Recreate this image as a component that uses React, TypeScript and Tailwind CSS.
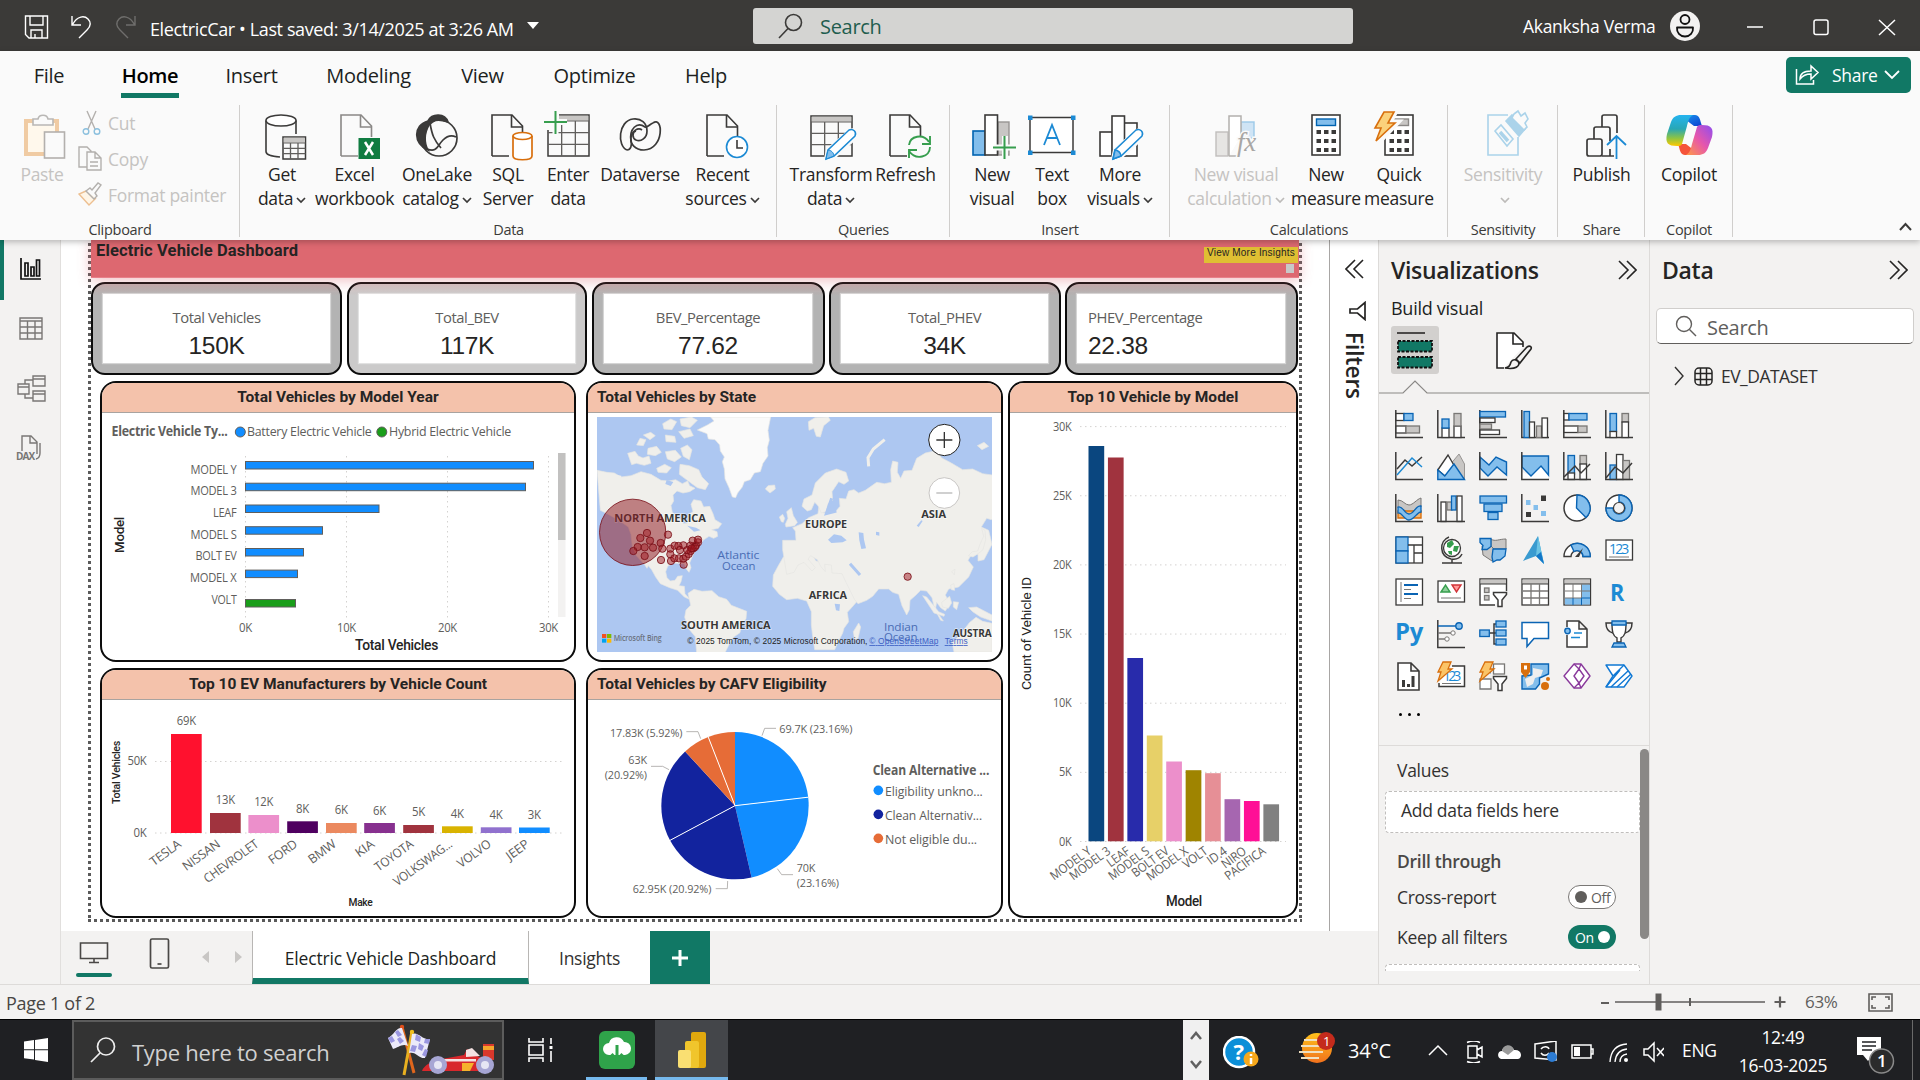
import React from "react";

type P = { children?: React.ReactNode };

/* ---------- shared svg text ---------- */
function Txt({ x, y, s, len, anchor = "start", fill = "#605e5c", w = 400, rot, din, children }: {
  x: number; y: number; s: number; len?: number; anchor?: "start" | "middle" | "end"; fill?: string; w?: number; rot?: number; din?: boolean; children: React.ReactNode;
}) {
  return (
    <text x={x} y={y} fontSize={s} textAnchor={anchor} fill={fill} fontWeight={w} textLength={len} lengthAdjust="spacingAndGlyphs"
      transform={rot ? `rotate(${rot} ${x} ${y})` : undefined} fontFamily={din ? "Roboto, sans-serif" : "'Open Sans', sans-serif"}>
      {children}
    </text>
  );
}

/* ---------- title bar ---------- */
function TitleBar() {
  return (
    <header className="flex h-[51px] shrink-0 items-center bg-[#3b3a38] text-white">
      <svg className="ml-6 shrink-0" width="112" height="28" viewBox="0 0 112 28" fill="none" stroke="#fff" strokeWidth="1.4">
        <path d="M1.500 4h22v22H5l-3.500-3.500zM6 4v9h13V4M7 26v-8h11v8M11 22v4" />
        <path d="M48 4v9h9M48.500 12.500c5-9 12-9 15.500-5.500 4 4 2 8-1 11l-8 8" />
        <path d="M111 4v9h-9M110.500 12.500c-5-9-12-9-15.500-5.500-4 4-2 8 1 11l8 8" stroke="#6f6e6c" />
      </svg>
      <span className="ml-[14px] mt-[7px] w-[366px] whitespace-nowrap text-[18px] leading-6 tracking-[-0.021em]">ElectricCar • Last saved: 3/14/2025 at 3:26 AM</span>
      <span className="ml-[11px] h-0 w-0 border-x-[6px] border-t-[7px] border-x-transparent border-t-white" />
      <div className="ml-[214px] flex h-9 w-[600px] items-center rounded-[3px] bg-[#d4d4d2] pl-[25px]">
        <svg width="25" height="26" viewBox="0 0 25 26" fill="none" stroke="#3b3a38" strokeWidth="1.600">
          <circle cx="15.500" cy="9.500" r="8" /><path d="M10 15.500L1 25" />
        </svg>
        <span className="ml-[17px] mt-[3px] text-[20px] leading-7 text-[#1f5d4e]">Search</span>
      </div>
      <span className="ml-[170px] mt-px w-[132px] whitespace-nowrap text-[17.500px]">Akanksha Verma</span>
      <svg className="ml-[14px]" width="32" height="32" viewBox="0 0 32 32">
        <circle cx="16" cy="16" r="15" fill="#f3f2f1" />
        <circle cx="16" cy="9.500" r="4.500" fill="none" stroke="#111" strokeWidth="1.800" />
        <path d="M8 17.500h16c.500 5-3 9-8 9s-8.500-4-8-9z" fill="none" stroke="#111" strokeWidth="1.800" strokeLinejoin="round" />
      </svg>
      <svg className="ml-[46px] mt-[2px]" width="150" height="20" viewBox="0 0 150 20" fill="none" stroke="#fff" strokeWidth="1.500">
        <path d="M0 10h16M132 3l16 15M148 3l-16 15" /><rect x="67" y="3" width="14" height="14.500" rx="2" />
      </svg>
    </header>
  );
}

/* ---------- ribbon ---------- */
const tabs: [string, string][] = [
  ["File", "w-[32px]"], ["Home", "w-[58px]"], ["Insert", "w-[52px]"], ["Modeling", "w-[89px]"], ["View", "w-[45px]"], ["Optimize", "w-[85px]"], ["Help", "w-[44px]"],
];
function Tabs() {
  return (
    <nav className="flex h-[47px] items-stretch pl-[33px] text-[20px] text-[#201f1e]">
      {tabs.map(([t, w], i) => (
        <div key={t} className={`flex h-[47px] flex-col items-center ${w} ${i === 0 ? "mr-[56px]" : i > 2 ? "mr-[47px]" : "mr-[46.500px]"}`}>
          <span className={`mt-[11px] h-[31px] whitespace-nowrap leading-[28px] ${i === 1 ? "font-semibold text-black" : ""}`}>{t}</span>
          {i === 1 && <span className="h-[5px] w-[58px] bg-[#117865]" />}
        </div>
      ))}
      <div className="ml-auto mr-[9px] mt-[6px] flex h-9 w-[125px] items-center rounded-[5px] bg-[#117865] text-white">
        <svg className="ml-[9px]" width="25" height="24" viewBox="0 0 25 24" fill="none" stroke="#fff" strokeWidth="1.500">
          <path d="M1.500 6v15h17v-4M5 16c0-6 5-8 11-8V3l7 6.500-7 6.500v-5c-5 0-8 1-11 5z" />
        </svg>
        <span className="ml-[12px] w-[45px] text-[17.500px]">Share</span>
        <svg className="ml-[7px]" width="16" height="10" viewBox="0 0 16 10" fill="none" stroke="#fff" strokeWidth="1.800"><path d="M1 1l7 7 7-7" /></svg>
      </div>
    </nav>
  );
}

const dk = "#3b3a39";
const bl = "#1c8ad4";
const Doc = ({ x = 0, c = dk }: { x?: number; c?: string }) => (
  <g transform={`translate(${x} 0)`} fill="none" stroke={c} strokeWidth="1.600">
    <path d="M0 45V4h20l10.500 11v11M0 45h17" /><path d="M19.500 4v12h11" />
  </g>
);
const GridIc = ({ x, y, w, h, n = 3, c = dk }: { x: number; y: number; w: number; h: number; n?: number; c?: string }) => {
  const hh = 6;
  const l: string[] = [];
  for (let i = 1; i < n; i++) { l.push(`M${x + (w * i) / n} ${y + hh}V${y + h}`); l.push(`M${x} ${y + hh + ((h - hh) * i) / 3}h${w}`); }
  return <g><rect x={x} y={y} width={w} height={h} fill="#fafafa" stroke={c} strokeWidth="1.500" /><rect x={x + 0.7} y={y + 0.7} width={w - 1.400} height={hh - 1} fill="#c8c6c4" /><path d={`M${x} ${y + hh}h${w}`} stroke="#605e5c" /><path d={l.join("")} stroke="#605e5c" strokeWidth="1.300" /></g>;
};
const Pencil = ({ x }: { x: number }) => (
  <g transform={`translate(${x} 0)`}>
    <path d="M-8 48l2-9L16 20c4-2 8 2 6 6L1 45z" fill="#fafafa" stroke="#fafafa" strokeWidth="4" />
    <path d="M-8 48l2-9L15 19c4-2 8 2 6 6L0 45z" fill="#fff" stroke={bl} strokeWidth="1.500" />
    <path d="M-8 48l2-9c3 0 6 3 6 6z" fill="#83beec" stroke={bl} />
  </g>
);
const Calc = ({ x, sc = "#83beec", ss = "#0063b1" }: { x: number; sc?: string; ss?: string }) => (
  <g transform={`translate(${x} 0)`}>
    <rect x="0" y="4" width="28" height="40" fill="#fff" stroke={dk} strokeWidth="1.600" />
    <rect x="4.500" y="8" width="19" height="6.500" fill={sc} stroke={ss} strokeWidth="1.400" />
    {[0, 1, 2].map((r) => [0, 1, 2].map((c) => <rect key={`${r}${c}`} x={4.500 + c * 7.500} y={19 + r * 9} width="4.500" height="4" fill={dk} />))}
  </g>
);

const icons: Record<string, React.ReactNode> = {
  get: <g><path d="M-16 9.500v31c0 3 6 5 14 5.500M14 9.500V23" fill="none" stroke={dk} strokeWidth="1.600" /><ellipse cx="-1" cy="9.500" rx="15" ry="5.500" fill="#fff" stroke={dk} strokeWidth="1.600" /><GridIc x={1} y={26} w={22.500} h={22} /></g>,
  excel: <g><Doc x={-14} c="#8a8886" /><rect x="3.500" y="27" width="21.500" height="21" fill="#107c41" /><path d="M10 31l8 13M18 31l-8 13" stroke="#fff" strokeWidth="2.500" /></g>,
  lake: <g fill="none" stroke={dk} strokeWidth="1.700"><circle cx="2" cy="27" r="18" /><path d="M-9 10C-5 2 8 2 11 11-1 7-4 10-8 14c-5 8-5 18-1 25-15-6-15-25 0-29z" fill={dk} /><path d="M-7 12c2 12 4 17 11 25M-10 38c10 4 10-3 16-9 5-5 9-5 13-3" /></g>,
  sql: <g><Doc x={-16} /><path d="M5 25v20c0 5 19 5 19 0V25" fill="#fff" stroke="#d86f0d" strokeWidth="1.700" /><ellipse cx="14.500" cy="25" rx="9.500" ry="3.500" fill="#fff" stroke="#d86f0d" strokeWidth="1.700" /></g>,
  enter: <g><GridIc x={-20} y={4} w={41} h={41} /><path d="M-23 0h14v19h-14z" fill="#fafafa" /><path d="M-24 11h23M-12.500 0v23" stroke="#fafafa" strokeWidth="6" /><path d="M-24 11h23M-12.500 0v23" stroke="#379e4e" strokeWidth="2" /></g>,
  data: <g fill="none" stroke={dk} strokeWidth="1.700"><path d="M-13 39c-10-4-9-29 6-31 8-1 14 4 14 12 0 7-6 11-11 9-4-2-4-8 0-9" /><path d="M13 12c10-8 12 26-9 27-9 0-14-6-13-13 1-6 7-10 11-7" /><path d="M-13 39c4 0 5-5 4-9-2-12 6-20 14-14 2 1 5-3 8-4" /></g>,
  recent: <g><Doc x={-16} /><circle cx="14" cy="36" r="10.500" fill="#fff" stroke={bl} strokeWidth="1.600" /><path d="M14 29v8h6" fill="none" stroke={dk} strokeWidth="1.600" /></g>,
  transform: <g><GridIc x={-20} y={5} w={41} h={40} /><Pencil x={3} /></g>,
  refresh: <g><Doc x={-16} /><path d="M3 34c1-9 14-12 20-3M24 36c0 10-14 14-21 4" fill="none" stroke="#379e4e" strokeWidth="1.900" /><path d="M24 25v8h-8M3 47v-8h8" fill="none" stroke="#379e4e" strokeWidth="1.900" /></g>,
  newvis: <g><rect x="-19" y="20" width="12" height="24" fill="#83beec" stroke="#0063b1" strokeWidth="1.600" /><rect x="6" y="11" width="11" height="33" fill="#c8c6c4" stroke="#979593" strokeWidth="1.400" /><rect x="-7" y="4" width="12.500" height="40" fill="#fff" stroke={dk} strokeWidth="1.600" /><path d="M2 36.500h22M13 25v23" stroke="#fafafa" strokeWidth="6" /><path d="M1 36.500h23M12.500 25v23" stroke="#379e4e" strokeWidth="2" /></g>,
  text: <g><rect x="-22" y="6.500" width="43" height="35" fill="#fff" stroke={dk} strokeWidth="1.500" /><path d="M-8 34L0 14l8 20M-5 27H5" fill="none" stroke={bl} strokeWidth="1.800" />{[[-22, 6.500], [21, 6.500], [-22, 41.500], [21, 41.500]].map(([a, b]) => <rect key={`${a}${b}`} x={a - 2} y={b - 2} width="4.500" height="4.500" fill={bl} />)}</g>,
  more: <g fill="#fff" stroke={dk} strokeWidth="1.600"><rect x="-20" y="21" width="12.500" height="24" /><rect x="4" y="12" width="13" height="33" /><rect x="-8" y="5" width="12.500" height="40" /><Pencil x={1} /></g>,
  calc: <g><rect x="-20" y="21" width="12" height="24" fill="#e6e5e3" stroke="#c0bebc" strokeWidth="1.400" /><rect x="5" y="11" width="13" height="16" fill="#cfe4f5" stroke="#9cc9e8" strokeWidth="1.400" /><path d="M-7 45V5H5v20M-7 45h8" fill="#fff" stroke="#b3b0ad" strokeWidth="1.500" /><text x="1" y="40" fontSize="27" fontStyle="italic" fill="#a8a6a4" fontFamily="Liberation Serif" stroke="#fafafa" strokeWidth="3" paintOrder="stroke">fx</text></g>,
  meas: <Calc x={-14} />,
  quick: <g><Calc x={-14} sc="#c8c6c4" ss="#8a8886" /><path d="M-14 0h11l-6 11h8l-20 21 5-13h-9z" fill="#fbd995" stroke="#fafafa" strokeWidth="5" /><path d="M-15 1H-5l-6 11h7l-19 18 5-13h-6z" fill="#fbd17b" stroke="#d86f0d" strokeWidth="1.600" /></g>,
  sens: <g fill="none" stroke="#abd3ea" strokeWidth="1.600"><path d="M5 4H-15v40H15V26" /><path d="M-8 20l6-6L10 28l-6 7z" /><path d="M-3 21l8 9" strokeWidth="3.500" /><path d="M3 10l6-6 13 14-6 7z" fill="#abd3ea" /><path d="M11 3l4-3 3 5 4-3 3 6-3 4 2 4-3 3-12-12z" fill="#fafafa" /></g>,
  publish: <g fill="none" stroke={dk} strokeWidth="1.700"><rect x="-15" y="28" width="15" height="17" rx="2" /><path d="M-8 28V18q0-2 2-2H6q2 0 2 2v12M0 16V6q0-2 2-2h11q2 0 2 2v16M0 45h12M8 38v7" /><path d="M14.500 48V26M5 34l9.500-9 9.500 9" stroke="#1c8ad4" strokeWidth="1.800" /></g>,
  copilot: (
    <g>
      <defs>
        <linearGradient id="ca" x1="0" y1="0" x2="0" y2="1"><stop offset="0" stopColor="#25b4f0" /><stop offset=".45" stopColor="#28a7b5" /><stop offset=".75" stopColor="#8fc442" /><stop offset="1" stopColor="#ffc800" /></linearGradient>
        <linearGradient id="cb" x1="1" y1="0" x2="0" y2="1"><stop offset="0" stopColor="#8e4df0" /><stop offset=".5" stopColor="#e656ac" /><stop offset="1" stopColor="#ff9a44" /></linearGradient>
        <linearGradient id="cc" x1="0" y1="0" x2="1" y2="1"><stop offset="0" stopColor="#1c9cf0" /><stop offset="1" stopColor="#0b3fd0" /></linearGradient>
      </defs>
      <path d="M-9 4H6c4 0 5 4 6 8l1 3H5L-3 9z" fill="url(#cc)" />
      <path d="M11 44H-4c-4 0-5-4-6-8l-1-3h8z" fill="#f5543a" />
      <path d="M-8 4H4C0 6-1 11-2 15l-5 18c-1 2-3 2-5 2-9 0-12-3-10-12l4-12c2-5 5-7 10-7z" fill="url(#ca)" />
      <path d="M9 44H-3c4-2 5-7 6-11L8 16c1-2 3-2 5-2 9 0 12 3 10 12l-4 11c-2 5-5 7-10 7z" fill="url(#cb)" />
    </g>
  ),
};

const Chev = ({ c = dk }: { c?: string }) => (
  <svg className="ml-[3px] inline-block" width="10" height="7" viewBox="0 0 10 7" fill="none" stroke={c} strokeWidth="1.700"><path d="M1 1l4 4 4-4" /></svg>
);
function Btn({ w, ic, a, b, chev, off }: { w: string; ic: string; a: string; b?: string; chev?: boolean; off?: boolean }) {
  return (
    <div className={`flex shrink-0 flex-col items-center pt-[13px] ${w} ${off ? "text-[#c5c3c1]" : "text-[#252423]"}`}>
      <svg className="shrink-0 overflow-visible" width="60" height="51" viewBox="-30 0 60 51">{icons[ic]}</svg>
      <span className="h-6 whitespace-nowrap text-[17.500px] leading-6">{a}</span>
      <span className="h-6 whitespace-nowrap text-[17.500px] leading-6">{b}{chev && <Chev c={off ? "#bdbbb9" : dk} />}</span>
    </div>
  );
}
function Group({ w, pad, label, children }: { w: string; pad: string; label: string } & P) {
  return (
    <section className={`relative flex h-[142px] shrink-0 flex-col ${w}`}>
      <div className={`flex h-[122px] ${pad}`}>{children}</div>
      <div className="h-[19px] text-center text-[14.500px] leading-[19px] text-[#3b3a39]">{label}</div>
      <span className="absolute right-0 top-[7px] h-[132px] w-px bg-[#d0cecc]" />
    </section>
  );
}
function Ribbon() {
  return (
    <div className="relative z-10 h-[189px] shrink-0 bg-[#fafafa] shadow-[0_2px_6px_rgba(0,0,0,0.25)]">
      <Tabs />
      <div className="flex">
        <Group w="w-[240px]" pad="text-[#c5c3c1]" label="Clipboard">
          <div className="flex w-[74px] flex-col items-center pl-[10px] pt-[13px]">
            <svg className="ml-[6px]" width="44" height="51" viewBox="0 0 44 51" fill="none" strokeWidth="1.600">
              <path d="M3 10h31v33H3z" stroke="#f0cba3" strokeWidth="4" /><path d="M5 12h27v29H5z" fill="#fff8ec" />
              <path d="M10 14V8h5c1-5 9-5 10 0h5v6z" fill="#fafafa" stroke="#b9b7b5" />
              <rect x="21.500" y="21" width="20" height="26" fill="#fafafa" stroke="#b3b0ad" />
            </svg>
            <span className="text-[17.500px] leading-6">Paste</span>
          </div>
          <div className="flex flex-col pt-[7px] text-[17.500px]">
            <div className="flex h-9 items-center gap-[6px] pl-[4px]">
              <svg width="24" height="26" viewBox="0 0 24 26" fill="none" stroke="#b3b0ad" strokeWidth="1.400"><path d="M9 1l8 18M18 1l-8 18" /><circle cx="8" cy="21.500" r="2.800" stroke="#8cc0de" /><circle cx="19" cy="21.500" r="2.800" stroke="#8cc0de" /></svg>Cut
            </div>
            <div className="flex h-9 items-center gap-[6px] pl-[4px]">
              <svg width="24" height="26" viewBox="0 0 24 26" fill="none" stroke="#b3b0ad" strokeWidth="1.400"><path d="M9 21H1V1h8l4 4v1M9 6h8l6 6v12H9zM17 6v6h6M12 16h8M12 20h8" /></svg>Copy
            </div>
            <div className="flex h-9 items-center gap-[6px] pl-[4px]">
              <svg width="24" height="26" viewBox="0 0 24 26" fill="none" stroke="#b3b0ad" strokeWidth="1.400"><path d="M8 9L1 12l10 11 7-7" stroke="#edbf90" fill="#fff5e6" /><path d="M8 9l4-3 2 2 6-7 3 2-6 8 2 3-3 3z" /></svg>Format painter
            </div>
          </div>
        </Group>
        <Group w="w-[537px]" pad="pl-[7px]" label="Data">
          <Btn w="w-[70px]" ic="get" a="Get" b="data" chev />
          <Btn w="w-[75px]" ic="excel" a="Excel" b="workbook" />
          <Btn w="w-[90px]" ic="lake" a="OneLake" b="catalog" chev />
          <Btn w="w-[52px]" ic="sql" a="SQL" b="Server" />
          <Btn w="w-[68px]" ic="enter" a="Enter" b="data" />
          <Btn w="w-[76px]" ic="data" a="Dataverse" />
          <Btn w="w-[89px]" ic="recent" a="Recent" b="sources" chev />
        </Group>
        <Group w="w-[173px]" pad="pl-[11px]" label="Queries">
          <Btn w="w-[86px]" ic="transform" a="Transform" b="data" chev />
          <Btn w="w-[63px]" ic="refresh" a="Refresh" />
        </Group>
        <Group w="w-[220px]" pad="pl-[16px]" label="Insert">
          <Btn w="w-[52px]" ic="newvis" a="New" b="visual" />
          <Btn w="w-[68px]" ic="text" a="Text" b="box" />
          <Btn w="w-[68px]" ic="more" a="More" b="visuals" chev />
        </Group>
        <Group w="w-[278px]" pad="pl-[10px]" label="Calculations">
          <Btn w="w-[112px]" ic="calc" a="New visual" b="calculation" chev off />
          <Btn w="w-[68px]" ic="meas" a="New" b="measure" />
          <Btn w="w-[78px]" ic="quick" a="Quick" b="measure" />
        </Group>
        <Group w="w-[110px]" pad="justify-center" label="Sensitivity"><Btn w="w-[90px]" ic="sens" a="Sensitivity" chev off /></Group>
        <Group w="w-[87px]" pad="justify-center" label="Share"><Btn w="w-[80px]" ic="publish" a="Publish" /></Group>
        <Group w="w-[88px]" pad="justify-center" label="Copilot"><Btn w="w-[80px]" ic="copilot" a="Copilot" /></Group>
        <svg className="ml-auto mr-2 mt-[124px]" width="13" height="9" viewBox="0 0 13 9" fill="none" stroke={dk} strokeWidth="2"><path d="M1 8l5.500-6L12 8" /></svg>
      </div>
    </div>
  );
}

/* ---------- left rail ---------- */
function Rail() {
  return (
    <aside className="flex w-[61px] shrink-0 flex-col border-r border-[#e1dfdd] bg-[#f3f2f1]">
      <div className="flex h-[60px] items-center border-l-4 border-[#117865] pb-[2px] pl-4">
        <svg width="22" height="22" viewBox="0 0 22 22" fill="none" stroke="#111" strokeWidth="1.700"><path d="M1 0v21h20" /><path d="M5 18V5h3v13zM11 18V9h3v9zM16.500 18V2h3v16z" /></svg>
      </div>
      <div className="flex h-[58px] items-center pb-px pl-[19px]">
        <svg width="24" height="23" viewBox="0 0 24 23" fill="none" stroke="#797775" strokeWidth="1.400"><path d="M1 1h22v21H1zM1 4h22M1 10h22M1 16h22M8.500 4v18M16 4v18" /></svg>
      </div>
      <div className="flex h-[62px] items-center pl-[17px]">
        <svg width="29" height="28" viewBox="0 0 29 28" fill="none" stroke="#797775" strokeWidth="1.400"><path d="M16 1h12v10H16zM16 4h12M1 9h11v10H1zM1 12h11M16 16h12v10H16zM16 19h12M8 9V5h8M8 19v4h8" /></svg>
      </div>
      <div className="flex h-[58px] items-center pl-[14px]">
        <svg width="30" height="30" viewBox="-1 -1 30 30" fill="none" stroke="#797775" strokeWidth="1.400"><path d="M7 16V1h9l6 6v12M15 1v7h7M25 8v10q0 5-4 6" /><text x="1" y="25" fontSize="10" fontWeight="700" fill="#797775" stroke="none" textLength="19" fontFamily="Open Sans">DAX</text></svg>
      </div>
    </aside>
  );
}

/* ---------- report ---------- */
function Kpi({ w, inner, bg, label, value, left }: { w: string; inner: string; bg: string; label: string; value: string; left?: boolean }) {
  return (
    <div className={`flex h-[93px] shrink-0 rounded-[14px] border-2 border-[#0c0c0c] pt-[10px] ${w} ${bg}`}>
      <div className={`flex h-[69px] flex-col bg-white shadow-[0_0_1px_1px_rgba(255,255,255,0.45)] ${inner} ${left ? "items-start pl-[11px]" : "items-center"}`}>
        <span className="mt-[11px] h-6 text-[14.800px] leading-6 tracking-[-0.03em] text-[#605e5c]">{label}</span>
        <span className="mt-[3px] font-['Liberation_Sans'] text-[24.500px] leading-7 text-[#252423]">{value}</span>
      </div>
    </div>
  );
}
function Box({ size, title, center, children }: { size: string; title: string; center?: boolean } & P) {
  return (
    <div className={`flex shrink-0 flex-col overflow-hidden rounded-[16px] border-2 border-[#0c0c0c] bg-white ${size}`}>
      <div className={`flex h-[30px] shrink-0 items-center border-b border-[#a8a3a0] bg-[#f4c2ab] font-['Roboto'] text-[15.500px] font-bold tracking-[0.001em] text-[#252423] ${center ? "justify-center" : "pl-[9px]"}`}>{title}</div>
      {children}
    </div>
  );
}
const dot = { stroke: "#d4d2d0", strokeWidth: 1, strokeDasharray: "1.500 3.500" };

function ModelYear() {
  const rows: [string, number, number, number, string][] = [
    ["MODEL Y", 46, 474.5, 461, "288"], ["MODEL 3", 46, 495.5, 482.7, "280"], ["LEAF", 23.500, 517.5, 504.5, "133.5"],
    ["MODEL S", 46, 539.5, 526.2, "77"], ["BOLT EV", 41, 560.5, 548, "58"], ["MODEL X", 46.500, 582.5, 569.6, "52"], ["VOLT", 25, 604.5, 599, "50"],
  ];
  return (
    <svg className="shrink-0" width="472" height="247" viewBox="102 413 472 247">
      <Txt x={111.500} y={436} s={13.500} len={116} w={700}>Electric Vehicle Ty...</Txt>
      <circle cx="240.300" cy="432" r="5" fill="#118dff" stroke="#605e5c" /><Txt x={247} y={436} s={13.500} len={124.500}>Battery Electric Vehicle</Txt>
      <circle cx="381.800" cy="432" r="5" fill="#1a9e1a" stroke="#605e5c" /><Txt x={389} y={436} s={13.500} len={122}>Hybrid Electric Vehicle</Txt>
      {[0, 1, 2, 3].map((i) => <g key={i}><path d={`M${245.500 + i * 101} 456V618`} {...dot} /><Txt x={245.500 + i * 101} y={632} s={12} anchor="middle" len={i ? 19 : 13}>{`${i * 10 || 0}K`}</Txt></g>)}
      {rows.map(([n, l, ty, by, w]) => <g key={n}><Txt x={236.500} y={ty - 0.7} s={12.500} len={l} anchor="end">{n}</Txt><rect x="245.500" y={by + 0.5} width={w} height="7.500" fill={n === "VOLT" ? "#1a9e1a" : "#118dff"} stroke="#605e5c" /></g>)}
      <Txt x={396.500} y={650} s={14} len={83} anchor="middle" w={500} fill="#252423" din>Total Vehicles</Txt>
      <Txt x={124} y={535} s={13} len={36} anchor="middle" fill="#252423" w={500} rot={-90} din>Model</Txt>
      <rect x="558" y="453" width="7.500" height="164" fill="#f3f2f1" /><rect x="558" y="453" width="7.500" height="87" fill="#c2c1c0" />
    </svg>
  );
}

function WorldMap() {
  const pts = [[201, 894], [181, 909], [210, 917], [264, 899], [173, 936], [194, 937], [219, 938], [160, 948], [194, 963], [242, 924], [247, 941], [271, 941], [284, 932], [295, 933], [310, 931], [300, 945], [271, 958], [243, 975], [273, 978], [283, 970], [297, 970], [311, 989], [310, 971], [318, 965], [326, 957], [332, 948], [340, 940], [348, 931], [354, 922], [338, 917], [354, 914], [331, 932], [345, 936], [322, 945], [335, 940], [983, 1025]];
  return (
    <svg className="mx-auto mt-1 shrink-0" width="395" height="235" viewBox="51 546 1185 705">
      <rect x="51" y="546" width="1185" height="705" fill="#adc7f1" />
      <g fill="#f0efeb" stroke="#e6e6e2" strokeWidth="2" strokeLinejoin="round">
        <path fill="#fafafa" d="M352 585l30-15 20-12-10-12h180l-8 40 4 30-6 22 2 25-15 22-8 25-18 4-12 20-18 6-6 16-14 18-6 14-10-2-10-28-12-26-2-30-6-22 6-14-12-18-2-18-14-16-20-2-4-16z" />
        <path d="M51 706l30 6 22 2 20 12 30-4 30-12 30 8 30 18 24 2 20-4 20 12 16-8 6 14 16 8-16 10-20 4-18-6-12 12 2 18-8 14 4 20 24 20 10 14 12-2 2-24 14-10-6-22 8-14 22 4 8 18 18-2 10 22 6 18 20 12-10 14-20 4 16 6 2 14-12 6-14-6-18 12-8 14-14 14-8 16-6 14-4 10 4 14-6 14-8-10-6-16-34-2-16 10-6 16 4 18 10 10 14-2 8-12 14-2-4 18-6 12 16 2 2 22 12 14 16 0 6-6 2 8-16 4-22-10-20-20-24-8-28-12-14-20-12-22-10-12-4 8-8-12-24-26-12-28-4-36-8-22-28-20-36-20-20-10z" />
        <path d="M60 712l64 10-2 60-62-6z" stroke="none" />
        <path d="M143 655l22-6 10 14 14 6 18-6 6 22-20 6-24-6-14 4zM204 640l26-6 14 18-18 10-24-4zM256 650l30-4 18 20-20 14-22-8zM190 600l22-8 14 10-16 12zM248 566l24-14 18 8-14 24-24-2zM300 552l34-6 18 10-22 22-26-6zM180 610l18 4-8 18-20-2zM230 700l24-12 20 10-14 16-26-2zM302 640l20-10 14 14-8 30-18-10zM300 688l28 4 28 12 10 22 20 20-10 18-24-6-30-22-24-18zM296 590l34-8 10 20-28 8zM256 600l28 4 4 18-30-2z" />
        <path d="M324 1075l18-12 24 6 30-2 20 18 24 8 14 18 46 18-2 22-14 18-4 24-20 14-12 20-14 28h-84l-4-50-20-24-12-34 4-22 14-14z" />
        <path d="M610 966l30-2 26-10 30-2 4 12 8 14 22 2 4-8 34 6 14 10 12 30 12 22 12 20 30 4-6 22-22 26-18 20 4 28-14 20-4 14-12 24-12 26h-60l-6-40-4-34 0-40-14-32-28-8-32 4-22-16-20-24 2-34 14-26zM820 1190l16-26 6 12-8 34-10 6z" />
        <path d="M608 944v-28l40 0-2-28-8-10 28-12 20-18 28-12 2-18 12-2 2 18 36-4 14-16-2-24 20 2 8-24 16-4 14 10 20-8 34-24 24 4 20-4-2-38 6-26 16 4-2 30 10 18 10-22 24-2 14-36 26-16 36-8 12 22 30 16 34 20 30-2 30 14 30 4 22-8v130l-26 12-14-4-16 26 22 10 10 42-24 46-18 4 0-20-20 2-10 16 16 20-14 30-30 30-30 6-10 18 14 26-14 22-14-10-12-16-4 22 24 34-8-2-18-34-8-34-16-20-18-2-14 14-18 16-2 28-8 16-14-28-10-34-18-6-12-10-30 0-18 22-18 12-26 10-10-12-26-52-12-26-30-2-2-24-20-2 2 22-14-16-10-20-20-12-8 10 22 26-10 10-24-26-18 8-12 22-22 6z" />
        <path d="M682 828l-16-14 6-22 24-12 10-36 30-30 34-12 28 10 8 26-14 10-16-8-20 30 2 26-14 10-6 24-14 4-10-22-10-10-10 22z" />
        <path d="M616 868l8-18-4-20 14-12 6 24 12 20-8 10-26 4zM604 860l-6-14 10-8 6 12-4 12zM556 762l8-10 20-2 2 12-16 12zM685 560l20-12 40-2 6 10-20 16-10 34-12-2-8-24-14 6zM1192 632l20-10 14 12-20 10zM1165 962l12-12 16-2 6-18 12-26-6-24 10 6 2 28-8 30-12 10-18 12zM1112 1050l10-4 2 20-10-2zM1085 1102l24-18 6 20-10 16-18-4zM1028 1082l12 4 36 44 18 8-2 6-30-10zM1120 1100l16 2-6 22-10-8zM1166 1118l24-2 46 24v18l-34-12-24-16zM1122 1251l-6-30 22-18 30-40 20-16 20 12 28 6v86zM1115 1010l10-8-2 18z" />
      </g>
      <path d="M866 694l-2-26 16-26 34-28" fill="none" stroke="#f0efeb" strokeWidth="9" />
      <g fill="#adc7f1"><path d="M744 914l18-16 22 4 16 14-12 6-34 2zM836 892l14 2 2 20 6 26-14 2-6-26zM764 1106l16 2-2 20-10-2zM322 872l26 6 14 8-20 4zM1010 872l14-16 4 2-12 18zM260 735l20 6-8 12-16-6zM888 890l10 2v10l-10-2z" /></g>
      <path d="M810 986l30 34M755 790l-16 46 30-8" stroke="#adc7f1" strokeWidth="9" fill="none" />
      {([["NORTH AMERICA", 103, 862, 274], ["EUROPE", 675, 879, 126], ["ASIA", 1024, 850, 74], ["AFRICA", 686, 1092, 115], ["SOUTH AMERICA", 303, 1183, 269], ["AUSTRA", 1118, 1206, 117]] as [string, number, number, number][]).map(([t, x, y, l]) => (
        <text key={t} x={x} y={y} fontSize="34" fontWeight="700" fill="#383838" stroke="#fff" strokeWidth="4" strokeOpacity=".6" paintOrder="stroke" textLength={l} lengthAdjust="spacingAndGlyphs" fontFamily="Open Sans">{t}</text>
      ))}
      <Txt x={412} y={972} s={31} len={126} fill="#4a6db5" w={500}>Atlantic</Txt><Txt x={426} y={1005} s={31} len={100} fill="#4a6db5" w={500}>Ocean</Txt>
      <Txt x={912} y={1187} s={31} len={102} fill="#4a6db5" w={500}>Indian</Txt><Txt x={912} y={1219} s={31} len={100} fill="#4a6db5" w={500}>Ocean</Txt>
      <circle cx="158" cy="892" r="99.500" fill="#8f1a22" fillOpacity=".52" stroke="#7a1018" strokeWidth="2.500" />
      {pts.map(([x, y], i) => <circle key={i} cx={x} cy={y} r="11" fill="#a01820" fillOpacity=".5" stroke="#7a1018" strokeWidth="2.500" />)}
      <circle cx="1093" cy="615" r="47" fill="#fff" stroke="#222" strokeWidth="3" /><path d="M1069 615h48M1093 591v48" stroke="#333" strokeWidth="4" />
      <circle cx="1093" cy="774" r="46" fill="#fff" stroke="#c8c6c4" strokeWidth="3" /><path d="M1069 774h48" stroke="#c0c0c0" strokeWidth="4" />
      <path fill="#f25022" d="M66 1197h13v12H66z" /><path fill="#7fba00" d="M81 1197h13v12H81z" /><path fill="#00a4ef" d="M66 1211h13v12H66z" /><path fill="#ffb900" d="M81 1211h13v12H81z" />
      <Txt x={101} y={1218} s={24} len={144} fill="#6b7280" w={600}>Microsoft Bing</Txt>
      <text x="322" y="1227" fontSize="25" fill="#222" textLength="540" fontFamily="Liberation Sans">© 2025 TomTom, © 2025 Microsoft Corporation,</text>
      <text x="868" y="1227" fontSize="25" fill="#3d5fc4" textDecoration="underline" textLength="207" fontFamily="Liberation Sans">© OpenStreetMap</text>
      <text x="1094" y="1227" fontSize="25" fill="#3d5fc4" textDecoration="underline" textLength="69" fontFamily="Liberation Sans">Terms</text>
    </svg>
  );
}

function Makers() {
  const d: [string, string, number, string, number, number, number][] = [
    ["TESLA", "69K", 734, "#ff112e", 171, 725, 35], ["NISSAN", "13K", 813, "#a0333e", 210, 804, 43], ["CHEVROLET", "12K", 815, "#ec8fcb", 248.4, 806, 64], ["FORD", "8K", 821.3, "#4f0060", 287.2, 813, 32],
    ["BMW", "6K", 823, "#eb895f", 326, 814, 31], ["KIA", "6K", 823, "#87308f", 364.2, 815, 20], ["TOYOTA", "5K", 825, "#a0333e", 403.2, 816, 44], ["VOLKSWAG...", "4K", 826.3, "#d9b300", 442, 818, 69], ["VOLVO", "4K", 827.3, "#9071ce", 480.8, 819, 38], ["JEEP", "3K", 827.5, "#118dff", 519, 819, 25],
  ];
  return (
    <svg className="shrink-0" width="472" height="216" viewBox="102 700 472 216">
      <path d="M155 761.500H562M155 833H562" {...dot} />
      <Txt x={146.500} y={765} s={12} len={19} anchor="end">50K</Txt><Txt x={146.500} y={837} s={12} len={13} anchor="end">0K</Txt>
      {d.map(([n, v, t, c, x, ty, l]) => (
        <g key={n}>
          <rect x={x} y={t} width="30.700" height={833 - t} fill={c} />
          <Txt x={x + 15.300} y={ty} s={12} len={v.length === 3 ? 19 : 13} anchor="middle">{v}</Txt>
          <Txt x={x + 11} y={846} s={12.500} len={l} anchor="end" rot={-36}>{n}</Txt>
        </g>
      ))}
      <Txt x={120} y={772.500} s={10.500} len={63} anchor="middle" w={500} fill="#252423" rot={-90} din>Total Vehicles</Txt>
      <Txt x={360.500} y={906} s={10.500} len={24} anchor="middle" w={500} fill="#252423" din>Make</Txt>
    </svg>
  );
}

function Pie() {
  const cx = 465, cy = 437, r = 221;
  const pt = (a: number) => `${cx + r * Math.sin((a * Math.PI) / 180)} ${cy - r * Math.cos((a * Math.PI) / 180)}`;
  const sl: [number, number, string][] = [[0, 83.4, "#118dff"], [83.4, 167, "#118dff"], [167, 241.9, "#12239e"], [241.9, 317.4, "#12239e"], [317.4, 338.7, "#e66c37"], [338.7, 360, "#e66c37"]];
  return (
    <svg className="shrink-0" width="413" height="216" viewBox="24 120 1239 648">
      {sl.map(([a, b, c]) => <path key={a} d={`M${cx} ${cy}L${pt(a)}A${r} ${r} 0 0 1 ${pt(b)}Z`} fill={c} />)}
      {[83.4, 241.9, 338.7].map((a) => <path key={a} d={`M${cx} ${cy}L${pt(a)}`} stroke="#fff" strokeWidth="3" />)}
      <path d="M546 227l8-22h34M319 215h35l8 21M213 319h35l19 10M592 626l13 18h34M407 686h35l1-23" fill="none" stroke="#a8a6a4" strokeWidth="2.500" />
      <Txt x={598} y={220} s={35} len={219}>69.7K (23.16%)</Txt>
      <Txt x={307} y={231} s={35} len={217} anchor="end">17.83K (5.92%)</Txt>
      <Txt x={201} y={312} s={35} len={56} anchor="end">63K</Txt><Txt x={201} y={357} s={35} len={127} anchor="end">(20.92%)</Txt>
      <Txt x={650} y={636} s={35} len={56}>70K</Txt><Txt x={650} y={682} s={35} len={127}>(23.16%)</Txt>
      <Txt x={394} y={699} s={35} len={236} anchor="end">62.95K (20.92%)</Txt>
      <Txt x={878} y={345} s={40} len={350} w={700}>Clean Alternative ...</Txt>
      <circle cx="895" cy="391" r="14.500" fill="#118dff" /><Txt x={915} y={408} s={40} len={293}>Eligibility unkno...</Txt>
      <circle cx="895" cy="463" r="14.500" fill="#12239e" /><Txt x={915} y={480} s={40} len={291}>Clean Alternativ...</Txt>
      <circle cx="895" cy="535" r="14.500" fill="#e66c37" /><Txt x={915} y={552} s={40} len={276}>Not eligible du...</Txt>
    </svg>
  );
}

function TopModels() {
  const d: [string, number, string, number][] = [
    ["MODEL Y", 446, "#0a467f", 47], ["MODEL 3", 457.5, "#a0333e", 47], ["LEAF", 658, "#282bab", 25], ["MODEL S", 735.5, "#e7d068", 47], ["BOLT EV", 761.5, "#ec8fcb", 42], ["MODEL X", 770.2, "#9f8400", 48], ["VOLT", 773.2, "#e68f96", 27], ["ID.4", 799.2, "#a666b0", 21], ["NIRO", 801, "#ff0f96", 27], ["PACIFICA", 804.3, "#808080", 47],
  ];
  return (
    <svg className="shrink-0" width="286" height="503" viewBox="1010 413 286 503">
      {[0, 1, 2, 3, 4, 5, 6].map((i) => <g key={i}><path d={`M1080 ${841.500 - i * 69.150}H1286`} {...dot} /><Txt x={1071.500} y={845.500 - i * 69.150} s={12} anchor="end" len={i > 1 ? 18.500 : 12.500}>{`${i * 5}K`}</Txt></g>)}
      {d.map(([n, t, c, l], i) => (
        <g key={n}>
          <rect x={1088.500 + i * 19.430} y={t} width="15.700" height={841.300 - t} fill={c} />
          <Txt x={1092 + i * 19.400} y={853} s={12.500} len={l} anchor="end" rot={-36}>{n}</Txt>
        </g>
      ))}
      <Txt x={1031} y={633.500} s={13.500} len={113} anchor="middle" fill="#252423" rot={-90} din>Count of Vehicle ID</Txt>
      <Txt x={1184} y={906} s={14} len={36} anchor="middle" w={500} fill="#252423" din>Model</Txt>
    </svg>
  );
}

function Report() {
  return (
    <div className="flex h-[691px] w-[1268px] flex-col bg-white pl-[27px]">
      <div className="flex h-[679px]">
        <div className="h-[679px] w-[3px] bg-[repeating-linear-gradient(to_bottom,#fff_0_3px,#5a5a5a_3px_6px)]" />
        <div className="relative flex w-[1208px] flex-col">
          <div className="relative flex h-[38px] shrink-0 items-start justify-between border-b border-[#e8808a] bg-[#dd6870] shadow-[0_2px_14px_rgba(221,104,112,0.45)]">
            <span className="pl-[5px] pt-[1px] font-['Roboto'] text-[16.500px] font-bold leading-5 tracking-[0.008em] text-[#252423]">Electric Vehicle Dashboard</span>
            <div className="mr-px mt-[7px] flex flex-col items-end">
              <span className="flex h-4 w-[94px] items-start justify-center whitespace-nowrap bg-[#dfbf33] font-['Liberation_Sans'] text-[10px] leading-3 tracking-[0.02em] text-[#252423]">View More Insights</span>
              <span className="mr-1 mt-px h-[9px] w-2 bg-[#c8c8c8]" />
            </div>
          </div>
          <div className="mt-1 flex">
            <Kpi w="w-[251px]" inner="ml-[10px] w-[227px]" bg="bg-[linear-gradient(#c0b0b0,#b3b3b3_12px)]" label="Total Vehicles" value="150K" />
            <Kpi w="ml-[5px] w-[240px]" inner="ml-[10px] w-[216px]" bg="bg-[linear-gradient(#d2c6c6,#cbcaca_12px)]" label="Total_BEV" value="117K" />
            <Kpi w="ml-[5px] w-[233px]" inner="ml-[10px] w-[208px]" bg="bg-[linear-gradient(#c0b0b0,#b3b3b3_12px)]" label="BEV_Percentage" value="77.62" />
            <Kpi w="ml-[4px] w-[232px]" inner="ml-[10px] w-[207px]" bg="bg-[linear-gradient(#c0b0b0,#b3b3b3_12px)]" label="Total_PHEV" value="34K" />
            <Kpi w="ml-[4px] w-[233px]" inner="ml-[10px] w-[208px]" bg="bg-[linear-gradient(#c0b0b0,#b3b3b3_12px)]" label="PHEV_Percentage" value="22.38" left />
          </div>
          <div className="ml-[9px] mt-[6px] flex gap-[5px]">
            <div className="grid grid-cols-[476px_417px] gap-x-[10px] gap-y-[6px]">
              <Box size="h-[281px] w-[476px]" title="Total Vehicles by Model Year" center><ModelYear /></Box>
              <Box size="h-[281px] w-[417px]" title="Total Vehicles by State"><WorldMap /></Box>
              <Box size="h-[250px] w-[476px]" title="Top 10 EV Manufacturers by Vehicle Count" center><Makers /></Box>
              <Box size="h-[250px] w-[417px]" title="Total Vehicles by CAFV Eligibility"><Pie /></Box>
            </div>
            <Box size="h-[537px] w-[290px]" title="Top 10 Vehicle by Model" center><TopModels /></Box>
          </div>
        </div>
        <div className="h-[679px] w-[3px] bg-[repeating-linear-gradient(to_bottom,#fff_0_3px,#5a5a5a_3px_6px)]" />
      </div>
      <div className="h-[3px] w-[1214px] bg-[repeating-linear-gradient(to_right,#5a5a5a_0_3px,#fff_3px_6px)]" />
    </div>
  );
}

function PageTabs() {
  return (
    <div className="flex h-[53px] w-[1317px] bg-[#f3f2f1]">
      <div className="ml-[15px] flex w-9 flex-col items-center">
        <svg className="mt-[11px]" width="30" height="22" viewBox="0 0 30 22" fill="none" stroke="#4a4846" strokeWidth="1.600"><path d="M1.500 1h27v15.500h-27zM15 17v3.500M10 20.500h10" /></svg>
        <span className="mt-[9px] h-1 w-9 rounded-sm bg-[#117865]" />
      </div>
      <svg className="ml-[37px] mt-[7px]" width="21" height="31" viewBox="0 0 21 31" fill="none" stroke="#4a4846" strokeWidth="1.700"><rect x="1.500" y="1" width="18" height="29" rx="1.500" /><path d="M8.500 26h4" /></svg>
      <svg className="ml-[32px] mt-[19px]" width="40" height="14" viewBox="0 0 40 14" fill="#c8c6c4"><path d="M7 1v12L0 7zM33 1v12l7-6z" /></svg>
      <div className="ml-[10px] flex w-[277px] items-center justify-center border-x border-b-[6px] border-x-[#b8b6b4] border-b-[#117865] bg-white pt-[7px] text-[17.500px] font-medium tracking-[-0.01em] text-[#201f1e]">Electric Vehicle Dashboard</div>
      <div className="flex w-[121px] items-center justify-center bg-white pt-[2px] text-[17.500px] text-[#323130]">Insights</div>
      <div className="flex w-[60px] items-center justify-center bg-[#117865]"><svg width="16" height="16" viewBox="0 0 16 16" stroke="#fff" strokeWidth="3"><path d="M0 8h16M8 0v16" /></svg></div>
    </div>
  );
}

function Filters() {
  return (
    <aside className="flex w-[49px] flex-col items-center border-l border-[#a8a6a4] bg-white">
      <svg className="mt-[19px]" width="19" height="20" viewBox="0 0 19 20" fill="none" stroke="#252423" strokeWidth="1.600"><path d="M10 1L1 10l9 9M18 1l-9 9 9 9" /></svg>
      <svg className="ml-[6px] mt-[22px]" width="19" height="20" viewBox="0 0 19 20" fill="none" stroke="#252423" strokeWidth="1.700"><path d="M17 1.500v17L9.500 12H2V8h7.500z" /></svg>
      <span className="mt-[11px] text-[22.500px] font-semibold leading-6 tracking-normal text-[#252423] [writing-mode:vertical-rl]">Filters</span>
    </aside>
  );
}

/* ---------- visualizations ---------- */
const B = "#83beec", BD = "#0a64b4", G = "#c8c6c4", GD = "#797775";
const Ax = () => <path d="M.800 0v27.500H28" fill="none" stroke={dk} strokeWidth="1.500" />;
const R = ({ x, y, w, h, f = "#fff", s = dk }: { x: number; y: number; w: number; h: number; f?: string; s?: string }) => <rect x={x} y={y} width={w} height={h} fill={f} stroke={s} strokeWidth="1.300" />;
const Bolt = () => <path d="M6 0h8l-3 7h4L1 19l3-9H1z" fill="#fbc467" stroke="#d86f0d" strokeWidth="1.300" />;
const Funnel = () => <path d="M14.500 14.500h13v2L23 22v6.500h-4V22l-4.500-5.500z" fill="#fff" stroke={dk} strokeWidth="1.500" />;
const vis: React.ReactNode[] = [
  <><Ax /><R x={1} y={3.500} w={8} h={7} /><R x={9} y={3.500} w={9} h={7} f={B} s={BD} /><R x={1} y={16} w={10} h={7} /><R x={11} y={16} w={13.500} h={7} f={G} s={GD} /></>,
  <><Ax /><R x={5} y={18} w={7} h={9.500} /><R x={5} y={9} w={7} h={9} f={B} s={BD} /><R x={17} y={16} w={7} h={11.500} /><R x={17} y={3.500} w={7} h={12.500} f={G} s={GD} /></>,
  <><Ax /><R x={1} y={1.500} w={25.500} h={5.500} f={B} s={BD} /><R x={1} y={8} w={15} h={4.500} /><R x={1} y={14} w={11.500} h={5} f={G} s={GD} /><R x={1} y={20} w={19.500} h={4.500} /></>,
  <><Ax /><R x={3} y={1.500} w={5.500} h={26} f={B} s={BD} /><R x={8.500} y={12} w={5} h={15.500} /><R x={15.500} y={16} w={5} h={11.500} f={G} s={GD} /><R x={21} y={8} w={5.500} h={19.500} /></>,
  <><Ax /><R x={1} y={3.500} w={5} h={6.500} /><R x={6} y={3.500} w={18} h={6.500} f={B} s={BD} /><R x={1} y={16} w={14} h={6.500} /><R x={15} y={16} w={9} h={6.500} f={G} s={GD} /></>,
  <><Ax /><R x={5} y={3.500} w={6.500} h={18} f={B} s={BD} /><R x={5} y={21.500} w={6.500} h={6} /><R x={17} y={3.500} w={6.500} h={8.500} f={G} s={GD} /><R x={17} y={12} w={6.500} h={15.500} /></>,
  <><Ax /><path d="M2 17l8-9 7 6L27 5" fill="none" stroke={dk} strokeWidth="1.500" /><path d="M2 23L17 6l10 9" fill="none" stroke={bl} strokeWidth="1.500" /></>,
  <><path d="M12 14L22 2l5.500 10v15z" fill={G} stroke="#979593" /><path d="M.800 18L11 3l7 12-10 9z" fill="#fff" stroke={dk} strokeWidth="1.400" /><path d="M.800 27.500V18l7 6L17 12l10.500 15.500z" fill={B} stroke={BD} strokeWidth="1.400" /></>,
  <><path d="M1 5l9 8 7-8 10.500 5v13L18 15 9 24l-8-8z" fill={B} stroke={BD} strokeWidth="1.400" /><Ax /></>,
  <><path d="M1 20l9 4 10-10 7 9v4H1z" fill="#fff" /><path d="M1 4h26.500v19L20 14 10 24 1 15z" fill={B} stroke={BD} strokeWidth="1.400" /><Ax /></>,
  <><R x={5} y={3.500} w={6.500} h={19} f={B} s={BD} /><R x={17} y={3.500} w={6.500} h={9} f={G} s={GD} /><R x={5} y={21} w={6.500} h={6.500} /><R x={17} y={12} w={6.500} h={15.500} /><path d="M1 25l11-11 6 7 9-9" fill="none" stroke={dk} strokeWidth="1.500" /><Ax /></>,
  <><R x={5} y={13} w={6.500} h={14.500} f={B} s={BD} /><R x={11.500} y={2.500} w={6.500} h={25} /><R x={18} y={8.500} w={6.500} h={19} f={G} s={GD} /><path d="M1 26l9-11 8 6 9-10" fill="none" stroke={dk} strokeWidth="1.500" /><Ax /></>,
  <><path d="M3 6c5 0 7 5 11 5s8-6 12-7v9c-4 0-7 5-12 5S8 13 3 14z" fill={G} stroke={GD} /><path d="M3 17h23v7H3z" fill="#f7b46b" stroke="#d86f0d" strokeWidth="1.400" /><path d="M3 13c5-2 6 7 11 7s7-9 12-8v6c-4 0-7 8-12 8S7 18 3 19z" fill={B} stroke={BD} strokeWidth="1.300" /><Ax /></>,
  <><R x={4} y={8} w={5} h={19.500} /><R x={10} y={8} w={5} h={8} f={G} s={GD} /><R x={14.500} y={2} w={4.500} h={14} f={B} s={BD} /><R x={20} y={2} w={5} h={25.500} /><Ax /></>,
  <><R x={1} y={2} w={26.500} h={7} f={B} s={BD} /><R x={5} y={10} w={18} h={7.500} f={B} s={BD} /><R x={9} y={18.500} w={10} h={7} f={B} s={BD} /></>,
  <><Ax /><path d="M20 1.500h5V7h-5zM5 18h5v5H5z" fill={dk} /><path d="M5 6h4.500v5H5zM12.500 11H17v5h-4.500zM20 17h5v5h-5z" fill={B} /></>,
  <><circle cx="14" cy="14" r="13" fill="#fff" stroke={dk} strokeWidth="1.500" /><path d="M14 1a13 13 0 0 1 9 22.400L13.500 14z" fill={B} stroke={BD} strokeWidth="1.400" /></>,
  <><circle cx="14" cy="14" r="13" fill="#fff" stroke={dk} strokeWidth="1.400" /><path d="M14 1A13 13 0 1 1 1 14h7a6 6 0 1 0 6-6z" fill={B} stroke={BD} strokeWidth="1.400" /><circle cx="14" cy="14" r="5.500" fill="#f3f2f1" stroke={dk} strokeWidth="1.200" /></>,
  <><R x={1} y={1} w={26.500} h={26} /><R x={1} y={1} w={12} h={14} f={B} s={BD} /><R x={1} y={15} w={12} h={12} f={B} s={BD} /><path d="M13 9h14M19 9v18M19 17h8" stroke={dk} strokeWidth="1.300" /></>,
  <><circle cx="15" cy="12" r="8.500" fill="#fff" stroke={dk} strokeWidth="1.300" /><path d="M10 7l5-3 2 4-4 4-3-1zM17 10l5 0-2 6-4-1zM11 15l4 0 0 4-3-1z" fill="#379e4e" /><path d="M12 1C2 5 2 20 14 23c5 1 9-1 11-5M15 23v4M5 27h20" fill="none" stroke={dk} strokeWidth="1.500" /></>,
  <><path d="M12 3c4 3 8 0 15 0v10H12z" fill={G} stroke={GD} /><path d="M3 10h9l4 4-3 11-9-6z" fill={G} stroke={GD} /><path d="M1 2.500h11v8l-4 3H3l1-4-3-3z" fill={B} stroke={BD} strokeWidth="1.300" /><path d="M14 13h13l-1 7-5 4h-3l-4 2-1-5z" fill={B} stroke={BD} strokeWidth="1.300" /></>,
  <><path d="M17 0l6 28-8-8-13 5z" fill="#3a9bd0" /><path d="M17 0L15 20l8 8z" fill="#6cc4e4" /><path d="M15 20l8 8-3-12z" fill="#1377c8" /></>,
  <><path d="M1 20.500a13 13 0 0 1 26 0h-7a6 6 0 0 0-12 0z" fill="#fff" stroke={dk} strokeWidth="1.400" /><path d="M8 9a13 13 0 0 1 19.300 11.500H20a6 6 0 0 0-9-5z" fill={B} stroke={BD} strokeWidth="1.400" /><path d="M12 21l8-9-4 9z" fill={dk} /></>,
  <><R x={1} y={4} w={26.500} h={20} /><text x="4" y="17.500" fontSize="14" fill={bl} textLength="20" fontFamily="Open Sans">123</text><path d="M4 21h20" stroke={GD} /></>,
  <><R x={1} y={1} w={26.500} h={26} /><path d="M6 4v20" stroke={GD} /><path d="M9 7h14M9 16h14" stroke={BD} strokeWidth="2" /><path d="M9 11.500h7M9 20.500h7" stroke={GD} /></>,
  <><R x={1} y={3} w={26.500} h={21} /><path d="M4 14l4.500-7 4.500 7z" fill="#8fcf9a" stroke="#379e4e" strokeWidth="1.400" /><path d="M15 7h9l-4.500 7z" fill="#ff9a9a" stroke="#d13438" strokeWidth="1.400" /><path d="M4 20h20" stroke={GD} /></>,
  <><path d="M16 27H1V1h26.500v12" fill="#fff" stroke={dk} strokeWidth="1.400" /><path d="M1.500 1.500h25.500V6H1.500z" fill={G} /><path d="M1 6h26" stroke={dk} /><R x={5.500} y={10} w={4.500} h={4.500} f={G} s={GD} /><R x={5.500} y={17.500} w={4.500} h={4.500} f={G} s={GD} /><Funnel /></>,
  <><R x={1} y={1} w={26.500} h={26} /><path d="M1.500 1.500h25.500V6H1.500z" fill={G} /><path d="M1 6h26" stroke={dk} /><path d="M2 13h25M2 20h25M10 6v20.500M18.500 6v20.500" stroke={GD} strokeWidth="1.300" /></>,
  <><R x={1} y={1} w={26.500} h={26} /><path d="M1.500 1.500h25.500V6H1.500z" fill={G} /><path d="M18.500 6.500H27V26.500H2V20h16.500z" fill={B} /><path d="M1 6h26" stroke={dk} /><path d="M2 13h25M10 6v14M2 20h16.500V6" stroke={GD} fill="none" /><path d="M10 20v7M18.500 20v7M18.500 20H27" stroke={BD} /></>,
  <text x="5" y="23" fontSize="24" fontWeight="700" fill={bl} fontFamily="Open Sans" textLength="14" lengthAdjust="spacingAndGlyphs">R</text>,
  <text x="0" y="20" fontSize="24" fontWeight="700" fill={bl} fontFamily="Open Sans" textLength="28" lengthAdjust="spacingAndGlyphs">Py</text>,
  <><Ax /><path d="M1 6h19" stroke={BD} strokeWidth="1.500" /><circle cx="22" cy="6" r="3.200" fill={B} stroke={BD} strokeWidth="1.400" /><path d="M1 13h13M1 19h7" stroke={GD} strokeWidth="1.400" /><circle cx="16" cy="13" r="2.200" fill="#fff" stroke={GD} /><circle cx="10" cy="19" r="2.200" fill="#fff" stroke={GD} /></>,
  <><path d="M10 13h7M21 4h-6v20h6" fill="none" stroke={dk} strokeWidth="1.500" /><R x={.800} y={10} w={9.500} h={6.500} f={B} s={BD} /><R x={17} y={1} w={10} h={6} f={B} s={BD} /><R x={17} y={10} w={10} h={6} f={B} s={BD} /><R x={17} y={19} w={10} h={6} f={B} s={BD} /></>,
  <path d="M1 2.500h26.500v16H13l-7 8v-8H1z" fill="#fff" stroke={BD} strokeWidth="1.500" />,
  <><path d="M4 7V1h12l8 8v18H4V15M16 1v8h8" fill="#fff" stroke={dk} strokeWidth="1.500" /><circle cx="4.500" cy="11" r="2.700" fill={B} stroke={BD} strokeWidth="1.400" /><path d="M11 13h8M8 17.500h9" stroke={bl} strokeWidth="1.400" /></>,
  <><path d="M7 3H1c0 6 2 9 7 10M21 3h6c0 6-2 9-7 10" fill="none" stroke={dk} strokeWidth="1.500" /><path d="M7 3h14c0 9-1 13-5 15v4h-4v-4C8 16 7 12 7 3z" fill="#fff" stroke={dk} strokeWidth="1.400" /><path d="M7 1h14v4H7zM9 23h10l2 4H7z" fill={B} stroke={BD} strokeWidth="1.300" /></>,
  <><path d="M3 1h13l8 8v19H3zM16 1v8h8" fill="#fff" stroke={dk} strokeWidth="1.600" /><path d="M7 18h3v7H7zM12 22h3v3h-3zM16.500 14h3v11h-3z" fill={dk} /></>,
  <><path d="M15 4h12.500v20.500H2V21" fill="#fff" stroke={dk} strokeWidth="1.500" /><text x="6" y="19" fontSize="14" fill={bl} textLength="18" fontFamily="Open Sans">123</text><path d="M5 21.500h19" stroke={GD} /><Bolt /></>,
  <><R x={14.500} y={2} w={11} h={10} s={GD} /><path d="M1 17h11v10H1z" fill="#fff" stroke={GD} strokeWidth="1.300" /><path d="M12 11l-3-1 2-3" fill={B} stroke={BD} /><Bolt /><Funnel /></>,
  <><path d="M10 2h17.500v10l-9 4v6l-4 5H1V14l9-1z" fill={B} stroke={BD} strokeWidth="1.400" /><path d="M12 6l10 2-2 6-6 2-2 6-6 3-2-8 8-4z" fill="#eee" /><path d="M0 1h9v9l-4.500 6L0 10z" fill="#d86f0d" /><rect x="3" y="3.500" width="3" height="4" fill="#fff" /><circle cx="24" cy="24" r="4" fill="#d86f0d" /><circle cx="27" cy="17" r="2" fill="#d86f0d" /></>,
  <g fill="#fff" stroke="#8a3a9c" strokeWidth="1.400" strokeLinejoin="round"><path d="M11 2h7l9 12-9 12h-7L1 14z" /><path d="M11 2l5 5-5 7 5 7-5 5M18 2l-2 5M18 26l-2-5M16 7l5 7-5 7M11 14l5-7M21 14l-5 7" fill="none" /></g>,
  <g fill="#fff" stroke="#0f78d4" strokeWidth="1.400" strokeLinejoin="round"><path d="M1 3h18l8 11-8 11H1l7-11z" /><path d="M8 14L19 3M1 25L15 8M6 25L23 9M12 25l14-13" fill="none" /></g>,
];
const DblR = () => <svg width="19" height="20" viewBox="0 0 19 20" fill="none" stroke="#252423" strokeWidth="1.600"><path d="M1 1l9 9-9 9M9 1l9 9-9 9" /></svg>;

function Visualizations() {
  return (
    <aside className="flex w-[272px] shrink-0 flex-col border-x border-[#dddbd9] bg-[#f3f2f1] text-[17.500px] text-[#323130]">
      <div className="flex h-[60px] items-center justify-between pl-[12px] pr-3">
        <h2 className="text-[23px] font-semibold tracking-[-0.015em] text-[#252423]">Visualizations</h2><DblR />
      </div>
      <div className="h-[26px] pl-[12px] text-[18px] font-medium tracking-[-0.015em] text-[#201f1e]"><span className="block leading-[17px]">Build visual</span></div>
      <div className="flex h-[48px] pl-3">
        <div className="flex h-12 w-12 items-center justify-center rounded-[3px] bg-[#d2d0ce]">
          <svg width="38" height="38" viewBox="0 0 38 38"><path d="M1 2h28" stroke={dk} strokeWidth="1.800" /><rect x="2" y="10" width="34" height="10.500" fill="#117865" stroke="#111" strokeWidth="1.800" strokeDasharray="3 1.500" /><rect x="2" y="26" width="34" height="10.500" fill="#117865" stroke="#111" strokeWidth="1.800" strokeDasharray="3 1.500" /></svg>
        </div>
        <svg className="ml-[57px] mt-[6px]" width="38" height="38" viewBox="0 0 38 38" fill="none" stroke="#252423" strokeWidth="1.600"><path d="M8 36H1V1h17l9 9v5" fill="#fff" /><path d="M17 1v11h10" /><path d="M9 36c4-1 5-2 6-6 2-4 8-2 8 2-1 4-7 5-14 4zM20 27l11-12c3-2 5 0 4 2L24 31z" fill="#f3f2f1" /></svg>
      </div>
      <svg className="mt-[6px] shrink-0" width="270" height="14" viewBox="0 0 270 14" fill="none" stroke="#8a8886" strokeWidth="1.200"><path d="M0 13h24L36 1l12 12h222" /></svg>
      <div className="mt-[16px] grid grid-cols-[repeat(6,42px)] pl-4">
        {vis.map((v, i) => <svg key={i} className="mb-[14px] overflow-visible" width="28" height="28" viewBox="0 0 28 28" fill="none">{v}</svg>)}
      </div>
      <div className="ml-[20px] mt-[9px] flex gap-[6px]">{[0, 1, 2].map((i) => <span key={i} className="h-[3px] w-[3px] rounded-full bg-black" />)}</div>
      <div className="mt-auto flex h-[239px] shrink-0 border-t border-[#dddbd9]">
        <div className="w-[261px] pl-[6px]">
          <div className="flex h-[45px] items-center pl-3 pt-[4px]">Values</div>
          <div className="flex h-[42px] w-[255px] items-center rounded-sm border border-dashed border-[#c0bebc] bg-white pb-[3px] pl-[15px]">Add data fields here</div>
          <div className="mt-[16px] flex h-6 items-center pl-3 font-semibold text-[#4a4846]">Drill through</div>
          <div className="mt-[12px] flex h-6 items-center pl-3"><span className="w-[171px]">Cross-report</span>
            <span className="flex h-6 w-12 items-center rounded-full border border-[#797775] bg-white pl-[6px] pt-px text-[14px] text-[#605e5c]"><i className="mb-px mr-1 h-3 w-3 rounded-full bg-[#605e5c]" />Off</span></div>
          <div className="mt-4 flex h-6 items-center pl-3"><span className="w-[171px]">Keep all filters</span>
            <span className="flex h-6 w-12 items-center rounded-full bg-[#117865] pl-[7px] pt-px text-[14px] text-white">On<i className="mb-px ml-1 h-3 w-3 rounded-full bg-white" /></span></div>
          <div className="mt-[15px] h-[7px] w-[255px] rounded-t-sm border border-b-0 border-dashed border-[#c0bebc] bg-white" />
        </div>
        <span className="mt-[3px] h-[190px] w-[9px] rounded-full bg-[#8a8886]" />
      </div>
    </aside>
  );
}

function DataPane() {
  return (
    <aside className="flex w-[270px] flex-col bg-[#f3f2f1]">
      <div className="flex h-[60px] items-center justify-between pl-3 pr-3"><h2 className="text-[23px] font-semibold text-[#252423]">Data</h2><DblR /></div>
      <div className="ml-[6px] mt-2 flex h-9 w-[258px] items-center rounded-[5px] border border-b-[1.500px] border-[#d0cecc] border-b-[#605e5c] bg-white pl-[18px]">
        <svg width="22" height="22" viewBox="0 0 22 22" fill="none" stroke="#605e5c" strokeWidth="1.400"><circle cx="9" cy="9" r="7.500" /><path d="M14.500 14.500L21 21" /></svg>
        <span className="ml-[10px] mt-[3px] text-[20px] text-[#605e5c]">Search</span>
      </div>
      <div className="mt-[20px] flex h-6 items-center pl-6 text-[17.500px] text-[#323130]">
        <svg width="10" height="20" viewBox="0 0 10 20" fill="none" stroke="#323130" strokeWidth="1.400"><path d="M1 1l8 9-8 9" /></svg>
        <svg className="ml-[10px]" width="19" height="19" viewBox="0 0 19 19" fill="none" stroke="#252423" strokeWidth="1.500"><rect x="1" y="1" width="17" height="17" rx="4" /><path d="M6.500 1v17M12.500 1v17M1 6.500h17M1 12.500h17" /></svg>
        <span className="ml-[8px] tracking-[-0.03em]">EV_DATASET</span>
      </div>
    </aside>
  );
}

/* ---------- bottom bars ---------- */
function Status() {
  return (
    <footer className="flex h-[35px] shrink-0 items-center border-t border-[#dddbd9] bg-[#f3f2f1] text-[18px] text-[#484644]">
      <span className="ml-[6px] mt-[3px]">Page 1 of 2</span>
      <svg className="ml-auto" width="186" height="20" viewBox="0 0 186 20" stroke="#605e5c" strokeWidth="1.300"><path d="M1 11h8M174.500 10h11M180 4.500v11" strokeWidth="2.200" /><path d="M15 10h150" /><path d="M58.500 1.500v17" strokeWidth="6" /><path d="M90 6v8" strokeWidth="2" /></svg>
      <span className="ml-[19px] w-[35px] text-[17px] text-[#605e5c]">63%</span>
      <svg className="ml-[28px] mr-[27px]" width="25" height="19" viewBox="0 0 25 19" fill="none" stroke="#605e5c" strokeWidth="1.600"><path d="M1 1h23v17H1zM4 7V4h4M17 4h4v3M21 12v3h-4M8 15H4v-3" /></svg>
    </footer>
  );
}

function Taskbar() {
  return (
    <div className="flex h-[61px] shrink-0 items-stretch border-t border-black bg-[#1f2023] text-white">
      <svg className="ml-6 mt-[18px] shrink-0" width="24" height="24" viewBox="0 0 24 24" fill="#fff"><path d="M0 3.500l10-1.400V11.300H0zM11 2l13-2v11.300H11zM0 12.300h10v9.200L0 20.200zM11 12.300h13V24l-13-2z" /></svg>
      <div className="ml-6 flex w-[432px] shrink-0 items-center border-2 border-[#5c5c5c] bg-[#333333] pl-4">
        <svg width="26" height="26" viewBox="0 0 26 26" fill="none" stroke="#eee" strokeWidth="1.700"><circle cx="16" cy="9.500" r="8.500" /><path d="M10 16L1 25" /></svg>
        <span className="ml-4 mt-[4px] w-[240px] whitespace-nowrap text-[22px] tracking-[-0.012em] text-[#d0d0d0]">Type here to search</span>
        <svg className="ml-[16px] shrink-0" width="108" height="54" viewBox="0 0 108 54">
          <path d="M14 4l12 46" stroke="#e0661c" strokeWidth="3" /><path d="M24 8L16 52" stroke="#e8b020" strokeWidth="3" /><circle cx="14" cy="4" r="2.200" fill="#e0501c" /><circle cx="24" cy="9" r="2.200" fill="#f0c020" />
          <path d="M14 5C8 4 6 12 0 15l5 11c5-1 9-6 15-3z" fill="#eceafa" /><path d="M24 11c6-3 10 6 18 5l-5 19c-6 1-9-7-16-5z" fill="#eceafa" />
          <path d="M10 7l4 5-4 2-3-5zM4 13l3 5-4 2-3-5zM12 14l4 4-4 3-3-5zM28 11l5 3-1 5-5-2zM37 16l5 0-1 5-5-1zM31 20l5 3-2 5-4-2zM24 22l5 1-2 6-5-1zM37 26l3 1-2 7-4-2z" fill="#9a96e0" />
          <path d="M34 48c2-6 10-10 20-12l22-4 3-6 12 8h12v14H36z" fill="#d8282c" /><path d="M95 21h11v16H95z" fill="#d8382c" /><path d="M95 23h11v4H95z" fill="#f6a62c" /><path d="M78 27l6-2 8 8-14 1z" fill="#f4e2e2" /><path d="M74 40h12l-4 8h-8z" fill="#f6b22c" /><path d="M52 36h36v2.500H52z" fill="#f4e2e2" />
          <circle cx="50" cy="42" r="9" fill="#a7a6d4" /><circle cx="50" cy="42" r="4" fill="#e6e6f4" /><circle cx="97" cy="42" r="9" fill="#a7a6d4" /><circle cx="97" cy="42" r="4" fill="#e6e6f4" />
        </svg>
      </div>
      <svg className="ml-6 mt-[18px] shrink-0" width="26" height="25" viewBox="0 0 26 25" fill="none" stroke="#fff" strokeWidth="1.600"><path d="M1 0v4h14V0M1 24v-4h14v4M1 7h14v10H1zM23 0v6M23 13v11" /><path d="M21.500 8h3v3h-3z" fill="#fff" stroke="none" /></svg>
      <div className="ml-[32px] flex w-[61px] shrink-0 flex-col items-center border-b-[3px] border-[#76b9ed] pt-[11px]">
        <svg width="36" height="38" viewBox="0 0 36 38"><rect width="36" height="38" rx="6" fill="#2fa34a" /><path d="M10 24a6 6 0 0 1 0-12 8 8 0 0 1 15-1 6.500 6.500 0 0 1 1 13z" fill="#fff" /><path d="M18 14v14M12.500 23l5.500 6 5.500-6" stroke="#2fa34a" strokeWidth="3" fill="none" /></svg>
      </div>
      <div className="ml-[8px] flex w-[73px] shrink-0 flex-col items-center border-b-[3px] border-[#76b9ed] bg-[#44464a] pt-[10px]">
        <svg width="28" height="40" viewBox="0 0 28 40"><rect x="13" y="2" width="15" height="36" rx="2" fill="#e0a80e" /><rect x="7" y="11" width="14" height="27" rx="2" fill="#f0c52c" /><rect x="0" y="20" width="13" height="18" rx="2" fill="#f9df72" /></svg>
      </div>
      <div className="ml-auto flex w-[26px] shrink-0 flex-col items-center justify-between bg-[#f0f0f0] py-[11px]">
        <svg width="12" height="9" viewBox="0 0 12 9" fill="none" stroke="#606060" strokeWidth="2.500"><path d="M1 8l5-6 5 6" /></svg>
        <svg width="12" height="9" viewBox="0 0 12 9" fill="none" stroke="#606060" strokeWidth="2.500"><path d="M1 1l5 6 5-6" /></svg>
      </div>
      <svg className="ml-[14px] mt-[16px] shrink-0" width="36" height="34" viewBox="0 0 36 34"><circle cx="16" cy="16" r="15" fill="#0b8fd8" stroke="#fff" strokeWidth="2.500" /><text x="10.500" y="24" fontSize="22" fontWeight="700" fill="#fff" fontFamily="Open Sans">?</text><circle cx="28" cy="23" r="7.500" fill="#f6a81c" /><path d="M28 18v2M28 22v6" stroke="#fff" strokeWidth="2.500" /></svg>
      <svg className="ml-[40px] mt-[11px] shrink-0" width="38" height="34" viewBox="0 0 38 34"><defs><linearGradient id="sun" x1="0" y1="0" x2="0" y2="1"><stop offset="0" stopColor="#ffc21c" /><stop offset="1" stopColor="#f0701c" /></linearGradient></defs><circle cx="18" cy="17" r="15" fill="url(#sun)" /><path d="M5 9h16M2 15h20M0 21h24M2 27h18" stroke="#f0e0c0" strokeWidth="2.200" /><circle cx="27" cy="10" r="9" fill="#c42b1c" /><text x="24" y="15" fontSize="13" fill="#fff" fontFamily="Open Sans">1</text></svg>
      <span className="ml-[11px] mt-[17px] w-[44px] whitespace-nowrap text-[20px] leading-7">34°C</span>
      <svg className="ml-[36px] mt-[21px] shrink-0" width="236" height="22" viewBox="0 0 236 22" fill="none" stroke="#fff" strokeWidth="1.500">
        <path d="M1 14l9-9 9 9" />
        <path d="M40 5h9v12h-9zM49 9l5-3v10l-5-3M39 1.500q7-3 13 0M39 20.500q7 3 13 0" />
        <path d="M73 18c-4-1-4-8 1-8 1-6 10-7 12-1 8-1 9 8 4 9z" fill="#fff" stroke="none" /><path d="M74 10c1-7 10-8 12-1l-6 5z" fill="#9a9a9a" stroke="none" />
        <path d="M107 3l21-3v19l-21-2z" /><path d="M113 8c2-3 7-3 8 0M121 12c-2 3-6 3-8 0" /><circle cx="124" cy="16" r="5" fill="#2c7cd4" stroke="none" />
        <path d="M144 4h19v13h-19zM163 8h2v5h-2" /><path d="M146 6h6v9h-6z" fill="#fff" stroke="none" />
        <path d="M182 21Q183 4 199 3M187 21Q188 9 199 8M192 21Q192 14 199 13" strokeWidth="1.300" /><circle cx="198" cy="19" r="2" fill="#fff" stroke="none" />
        <path d="M216 8h4l6-6v18l-6-6h-4zM229 7l7 8M236 7l-7 8" />
      </svg>
      <span className="ml-[18px] mt-[16px] w-[34px] text-[17.500px] leading-7">ENG</span>
      <div className="ml-[18px] mt-[3px] flex w-[98px] flex-col items-center whitespace-nowrap text-[17.500px] leading-7"><span>12:49</span><span>16-03-2025</span></div>
      <svg className="ml-[25px] mt-[17px] shrink-0" width="38" height="38" viewBox="0 0 38 38"><path d="M0 0h24v18H16l-5 6-5-6H0z" fill="#fff" /><path d="M5 5h14M5 9h14M5 13h10" stroke="#1f2023" strokeWidth="1.600" /><circle cx="24.500" cy="24" r="12" fill="#2b2b2b" stroke="#8a8a8a" strokeWidth="1.500" /><text x="20" y="30" fontSize="17" fill="#fff" fontWeight="600" fontFamily="Open Sans">1</text></svg>
      <span className="ml-[17px] mr-[7px] w-px bg-[#6a6a6a]" />
    </div>
  );
}

export default function App() {
  return (
    <div className="flex h-[1080px] w-[1920px] flex-col overflow-hidden font-['Open_Sans',sans-serif] tracking-[-0.018em] [font-stretch:92%]">
      <TitleBar />
      <Ribbon />
      <main className="flex h-[744px] shrink-0">
        <Rail />
        <div className="flex w-[1317px] shrink-0 flex-col">
          <div className="flex h-[691px]"><Report /><Filters /></div>
          <PageTabs />
        </div>
        <Visualizations />
        <DataPane />
      </main>
      <Status />
      <Taskbar />
    </div>
  );
}
